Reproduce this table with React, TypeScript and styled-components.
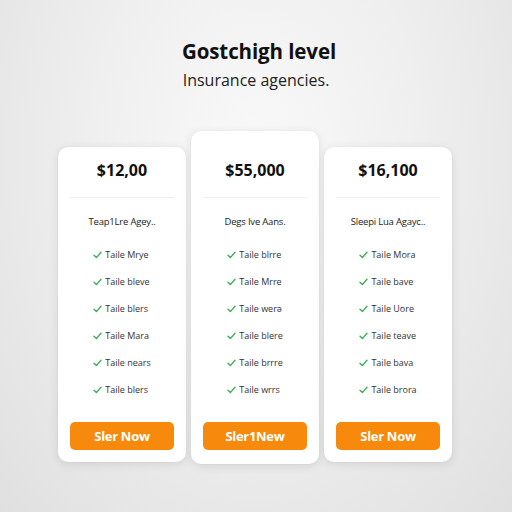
import React from "react";
import styled, { createGlobalStyle } from "styled-components";

interface Plan {
	price: string;
	subtitle: string;
	features: string[];
	cta: string;
	featured?: boolean;
}

const plans: Plan[] = [
	{
		price: "$12,00",
		subtitle: "Teap1Lre Agey..",
		features: ["Taile Mrye", "Taile bleve", "Taile blers", "Taile Mara", "Taile nears", "Taile blers"],
		cta: "Sler Now"
	},
	{
		price: "$55,000",
		subtitle: "Degs Ive Aans.",
		features: ["Taile blrre", "Taile Mrre", "Taile werə", "Taile blere", "Taile brrre", "Taile wrrs"],
		cta: "Sler1New",
		featured: true
	},
	{
		price: "$16,100",
		subtitle: "Sleepi Lua Agayc..",
		features: ["Taile Mora", "Taile bave", "Taile Uore", "Taile teave", "Taile bava", "Taile brora"],
		cta: "Sler Now"
	}
];

const GlobalStyle = createGlobalStyle`
	html, body {
		margin: 0;
		padding: 0;
	}
	body {
		width: 512px;
		height: 512px;
		overflow: hidden;
		font-family: "Open Sans", "Liberation Sans", sans-serif;
		background: radial-gradient(ellipse at 50% 30%, #f9f9f9 0%, #efefef 45%, #e0e0e0 100%);
	}
`;

const Page = styled.div`
	display: flex;
	flex-direction: column;
	align-items: center;
	padding-top: 38px;
`;

const Title = styled.h1`
	margin: 0 0 0 6px;
	font-size: 20.5px;
	line-height: 26px;
	font-weight: 700;
	color: #111;
	letter-spacing: -0.1px;
`;

const Lead = styled.p`
	margin: 5px 0 0;
	font-size: 16px;
	line-height: 22px;
	font-weight: 400;
	color: #222;
`;

const Cards = styled.div`
	display: flex;
	align-items: flex-start;
	gap: 5px;
	margin-top: 40px;
	padding-right: 2px;
`;

const Card = styled.div<{ $featured?: boolean }>`
	width: 128px;
	box-sizing: border-box;
	display: flex;
	flex-direction: column;
	align-items: center;
	margin-top: ${(p) => (p.$featured ? "0" : "16px")};
	padding: ${(p) => (p.$featured ? "29px 12px 14px" : "13px 12px 12px")};
	background: #fff;
	border-radius: 10px;
	box-shadow: 0 2px 10px rgba(0, 0, 0, 0.1), 0 0 2px rgba(0, 0, 0, 0.05);
`;

const Price = styled.div`
	font-size: 16px;
	line-height: 20px;
	font-weight: 700;
	color: #111;
`;

const Divider = styled.hr`
	align-self: stretch;
	margin: 17px 0 0;
	border: none;
	border-top: 1px solid #efefef;
`;

const Subtitle = styled.div`
	margin-top: 18px;
	font-size: 9.5px;
	line-height: 12px;
	color: #222;
	letter-spacing: -0.2px;
`;

const Features = styled.ul`
	list-style: none;
	margin: 13px 0 0;
	padding: 0;
	display: flex;
	flex-direction: column;
`;

const Feature = styled.li`
	height: 27px;
	display: flex;
	align-items: center;
	gap: 3px;
	font-size: 9px;
	color: #333;
`;

const Button = styled.button`
	margin-top: 19px;
	align-self: stretch;
	height: 28px;
	border: none;
	border-radius: 5px;
	background: #f7890c;
	color: #fff;
	font-family: "Open Sans", "Liberation Sans", sans-serif;
	font-size: 13px;
	font-weight: 700;
	letter-spacing: -0.3px;
	cursor: pointer;
`;

const Check = () => (
	<svg width="9" height="8" viewBox="0 0 9 8" fill="none">
		<polyline points="1,4.2 3.4,6.6 8,1.2" stroke="#3fae5a" strokeWidth="1.4" strokeLinecap="round" strokeLinejoin="round" />
	</svg>
);

export default function App() {
	return (
		<>
			<GlobalStyle />
			<Page>
				<Title>Gostchigh level</Title>
				<Lead>Insurance agencies.</Lead>
				<Cards>
					{plans.map((plan) => (
						<Card key={plan.price} $featured={plan.featured}>
							<Price>{plan.price}</Price>
							<Divider />
							<Subtitle>{plan.subtitle}</Subtitle>
							<Features>
								{plan.features.map((f, i) => (
									<Feature key={i}>
										<Check />
										{f}
									</Feature>
								))}
							</Features>
							<Button>{plan.cta}</Button>
						</Card>
					))}
				</Cards>
			</Page>
		</>
	);
}
